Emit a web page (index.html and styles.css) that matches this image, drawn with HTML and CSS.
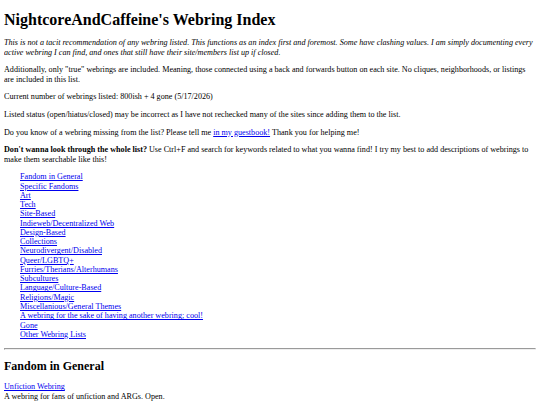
FILE: index.html
```html
<!DOCTYPE html>
<html>
  <head>
    <title>NightcoreAndCaffeine's Webring Index</title>
    <link rel="stylesheet" href="styles.css">
  </head>
  <body>
    <h1>NightcoreAndCaffeine's Webring Index</h1>
    <p><i>This is not a tacit recommendation of any webring listed. This functions as an index first and foremost. Some have clashing values. I am simply documenting every active webring I can find, and ones that still have their site/members list up if closed.</i></p>
    <p>Additionally, only "true" webrings are included. Meaning, those connected using a back and forwards button on each site. No cliques, neighborhoods, or listings are included in this list.</p>
    <p>Current number of webrings listed: 800ish + 4 gone (5/17/2026)</p>
    <p>Listed status (open/hiatus/closed) may be incorrect as I have not rechecked many of the sites since adding them to the list.</p>
    <p>Do you know of a webring missing from the list? Please tell me <a href="#">in my guestbook!</a> Thank you for helping me!</p>
    <p><b>Don't wanna look through the whole list?</b> Use Ctrl+F and search for keywords related to what you wanna find! I try my best to add descriptions of webrings to make them searchable like this!</p>

    <ul class="index">
      <li><a href="#fandom">Fandom in General</a></li>
      <li><a href="#">Specific Fandoms</a></li>
      <li><a href="#">Art</a></li>
      <li><a href="#">Tech</a></li>
      <li><a href="#">Site-Based</a></li>
      <li><a href="#">Indieweb/Decentralized Web</a></li>
      <li><a href="#">Design-Based</a></li>
      <li><a href="#">Collections</a></li>
      <li><a href="#">Neurodivergent/Disabled</a></li>
      <li><a href="#">Queer/LGBTQ+</a></li>
      <li><a href="#">Furries/Therians/Alterhumans</a></li>
      <li><a href="#">Subcultures</a></li>
      <li><a href="#">Language/Culture-Based</a></li>
      <li><a href="#">Religions/Magic</a></li>
      <li><a href="#">Miscellanious/General Themes</a></li>
      <li><a href="#">A webring for the sake of having another webring; cool!</a></li>
      <li><a href="#">Gone</a></li>
      <li><a href="#">Other Webring Lists</a></li>
    </ul>

    <hr>

    <h2 id="fandom">Fandom in General</h2>
    <p><a href="#">Unfiction Webring</a><br>
    A webring for fans of unfiction and ARGs. Open.</p>
  </body>
</html>
```

FILE: styles.css
```css
body{
  margin: 4px;
  font-family: "Liberation Serif", "Times New Roman", serif;
  font-size: 8.15px;
  line-height: 9.26px;
  color: black;
  background-color: white;
}
h1{
  font-size: 16px;
  line-height: 18px;
  margin: 6.7px 0 9.6px;
}
h2{
  font-size: 12px;
  line-height: 14px;
  margin: 9.4px 0;
}
p{
  margin: 8.45px 0;
}
a{
  color: #0000ee;
}
.index{
  list-style: none;
  margin: 8.45px 0;
  padding-left: 16px;
}
hr{
  margin: 4px 0;
}
```
